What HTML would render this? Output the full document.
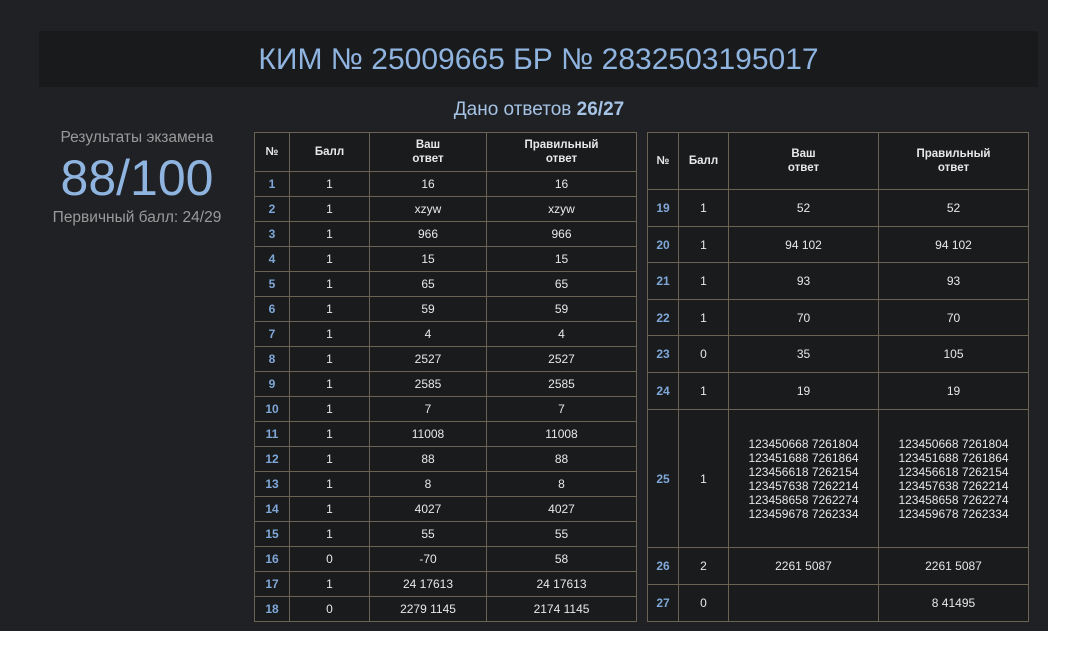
<!DOCTYPE html>
<html><head><meta charset="utf-8"><style>
html,body{margin:0;padding:0;background:#fff;width:1068px;height:652px;overflow:hidden;font-family:"Liberation Sans",sans-serif}
#bg{position:absolute;left:0;top:0;width:1048px;height:631px;background:#1f2124}
#hdr{position:absolute;left:39px;top:31px;width:999px;height:56px;background:#191a1c;color:#8fb4e0;font-size:30px;text-align:center;line-height:58px}
#dano{position:absolute;left:0;width:1078px;top:99px;text-align:center;color:#a6c3e6;font-size:19px}
#res{position:absolute;left:37px;width:200px;text-align:center;color:#9a9a9a}
table{position:absolute;border-collapse:collapse;table-layout:fixed;background:#1a1b1d;color:#e8e8e8;font-size:12px;text-align:center}
td,th{border:1px solid #6b6254;padding:0;line-height:14px}
th{font-weight:bold;font-size:11.5px}
td:first-child{color:#7fa8d8;font-weight:bold}
</style></head><body>
<div id="bg"></div>
<div id="hdr">КИМ № 25009665 БР № 2832503195017</div>
<div id="dano">Дано ответов <b>26/27</b></div>
<div id="res" style="top:129px;font-size:15.5px">Результаты экзамена</div>
<div id="res" style="top:149px;font-size:50px;color:#8fb4e0">88/100</div>
<div id="res" style="top:209px;font-size:15.5px">Первичный балл: 24/29</div>
<table style="left:254px;top:132px;width:383px">
<colgroup><col style="width:35px"><col style="width:80px"><col style="width:117px"><col style="width:150px"></colgroup>
<tr style="height:39px"><th>№</th><th>Балл</th><th>Ваш<br>ответ</th><th>Правильный<br>ответ</th></tr>
<tr style="height:25px"><td>1</td><td>1</td><td>16</td><td>16</td></tr>
<tr style="height:25px"><td>2</td><td>1</td><td>xzyw</td><td>xzyw</td></tr>
<tr style="height:25px"><td>3</td><td>1</td><td>966</td><td>966</td></tr>
<tr style="height:25px"><td>4</td><td>1</td><td>15</td><td>15</td></tr>
<tr style="height:25px"><td>5</td><td>1</td><td>65</td><td>65</td></tr>
<tr style="height:25px"><td>6</td><td>1</td><td>59</td><td>59</td></tr>
<tr style="height:25px"><td>7</td><td>1</td><td>4</td><td>4</td></tr>
<tr style="height:25px"><td>8</td><td>1</td><td>2527</td><td>2527</td></tr>
<tr style="height:25px"><td>9</td><td>1</td><td>2585</td><td>2585</td></tr>
<tr style="height:25px"><td>10</td><td>1</td><td>7</td><td>7</td></tr>
<tr style="height:25px"><td>11</td><td>1</td><td>11008</td><td>11008</td></tr>
<tr style="height:25px"><td>12</td><td>1</td><td>88</td><td>88</td></tr>
<tr style="height:25px"><td>13</td><td>1</td><td>8</td><td>8</td></tr>
<tr style="height:25px"><td>14</td><td>1</td><td>4027</td><td>4027</td></tr>
<tr style="height:25px"><td>15</td><td>1</td><td>55</td><td>55</td></tr>
<tr style="height:25px"><td>16</td><td>0</td><td>-70</td><td>58</td></tr>
<tr style="height:25px"><td>17</td><td>1</td><td>24 17613</td><td>24 17613</td></tr>
<tr style="height:25px"><td>18</td><td>0</td><td>2279 1145</td><td>2174 1145</td></tr>
</table>
<table style="left:647px;top:132px;width:382px">
<colgroup><col style="width:31px"><col style="width:50px"><col style="width:150px"><col style="width:150px"></colgroup>
<tr style="height:57px"><th>№</th><th>Балл</th><th>Ваш<br>ответ</th><th>Правильный<br>ответ</th></tr>
<tr style="height:37px"><td>19</td><td>1</td><td>52</td><td>52</td></tr>
<tr style="height:36px"><td>20</td><td>1</td><td>94 102</td><td>94 102</td></tr>
<tr style="height:37px"><td>21</td><td>1</td><td>93</td><td>93</td></tr>
<tr style="height:36px"><td>22</td><td>1</td><td>70</td><td>70</td></tr>
<tr style="height:37px"><td>23</td><td>0</td><td>35</td><td>105</td></tr>
<tr style="height:37px"><td>24</td><td>1</td><td>19</td><td>19</td></tr>
<tr style="height:138px"><td>25</td><td>1</td><td>123450668 7261804<br>123451688 7261864<br>123456618 7262154<br>123457638 7262214<br>123458658 7262274<br>123459678 7262334</td><td>123450668 7261804<br>123451688 7261864<br>123456618 7262154<br>123457638 7262214<br>123458658 7262274<br>123459678 7262334</td></tr>
<tr style="height:37px"><td>26</td><td>2</td><td>2261 5087</td><td>2261 5087</td></tr>
<tr style="height:37px"><td>27</td><td>0</td><td></td><td>8 41495</td></tr>
</table>
</body></html>
